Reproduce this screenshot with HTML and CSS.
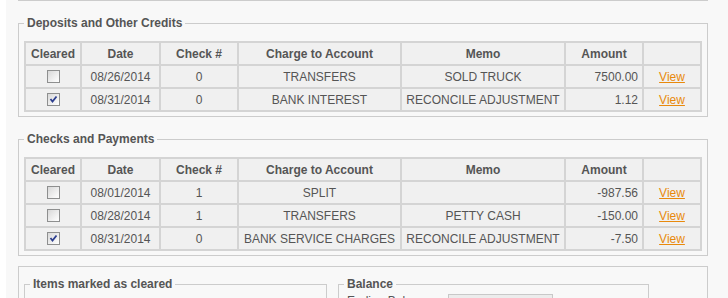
FILE: index.html
```html
<!DOCTYPE html>
<html>
<head>
<meta charset="utf-8">
<title>Reconcile</title>
<link rel="stylesheet" href="styles.css">
</head>
<body>
<div class="page">
  <div class="prev"></div>

  <fieldset class="group">
    <legend>Deposits and Other Credits</legend>
    <table class="grid">
      <thead>
        <tr><th class="c-clr">Cleared</th><th class="c-date">Date</th><th class="c-chk">Check #</th><th class="c-acct">Charge to Account</th><th class="c-memo">Memo</th><th class="c-amt">Amount</th><th class="c-view"></th></tr>
      </thead>
      <tbody>
        <tr><td><span class="cb"></span></td><td>08/26/2014</td><td>0</td><td>TRANSFERS</td><td>SOLD TRUCK</td><td class="amt">7500.00</td><td><a href="#">View</a></td></tr>
        <tr><td><span class="cb"><svg viewBox="0 0 11 11" width="11" height="11"><path d="M2.5 5 L4.5 7.5 L8.5 2.5" fill="none" stroke="#2d3f8f" stroke-width="1.8"/></svg></span></td><td>08/31/2014</td><td>0</td><td>BANK INTEREST</td><td>RECONCILE ADJUSTMENT</td><td class="amt">1.12</td><td><a href="#">View</a></td></tr>
      </tbody>
    </table>
  </fieldset>

  <fieldset class="group">
    <legend>Checks and Payments</legend>
    <table class="grid">
      <thead>
        <tr><th class="c-clr">Cleared</th><th class="c-date">Date</th><th class="c-chk">Check #</th><th class="c-acct">Charge to Account</th><th class="c-memo">Memo</th><th class="c-amt">Amount</th><th class="c-view"></th></tr>
      </thead>
      <tbody>
        <tr><td><span class="cb"></span></td><td>08/01/2014</td><td>1</td><td>SPLIT</td><td></td><td class="amt">-987.56</td><td><a href="#">View</a></td></tr>
        <tr><td><span class="cb"></span></td><td>08/28/2014</td><td>1</td><td>TRANSFERS</td><td>PETTY CASH</td><td class="amt">-150.00</td><td><a href="#">View</a></td></tr>
        <tr><td><span class="cb"><svg viewBox="0 0 11 11" width="11" height="11"><path d="M2.5 5 L4.5 7.5 L8.5 2.5" fill="none" stroke="#2d3f8f" stroke-width="1.8"/></svg></span></td><td>08/31/2014</td><td>0</td><td>BANK SERVICE CHARGES</td><td>RECONCILE ADJUSTMENT</td><td class="amt">-7.50</td><td><a href="#">View</a></td></tr>
      </tbody>
    </table>
  </fieldset>

  <div class="summary">
    <fieldset class="sub items">
      <legend>Items marked as cleared</legend>
      <div class="items-body">
        <div class="line">Deposits and Other Credits</div>
        <div class="line">Checks and Payments</div>
      </div>
    </fieldset>
    <fieldset class="sub balance">
      <legend>Balance</legend>
      <div class="bal-row">
        <span class="bal-label">Ending Balance</span>
        <span class="inp"></span>
      </div>
    </fieldset>
  </div>
</div>
</body>
</html>
```

FILE: styles.css
```css
* { box-sizing: border-box; }
html, body { margin: 0; height: 298px; overflow: hidden; }
body {
  background: #fff;
  font-family: "Liberation Sans", Arial, sans-serif;
  font-size: 12px;
  color: #555;
}
.page {
  margin-left: 6px;
  background: #f8f8f8;
  padding: 0 20px 0 12px;
  min-height: 298px;
}
.prev { border-top: 1px solid #ccc; }

.group {
  margin: 15px 0 0;
  border: 1px solid #ccc;
  padding: 11px 5px 4px;
  min-width: 0;
}
legend {
  padding: 0 3px;
  font-weight: bold;
  line-height: 14px;
  color: #555;
}

.grid {
  width: 100%;
  table-layout: fixed;
  border-collapse: separate;
  border-spacing: 0;
  border-top: 2px solid #d4d4d4;
  border-left: 2px solid #d4d4d4;
}
.grid th, .grid td {
  border-right: 2px solid #d4d4d4;
  border-bottom: 2px solid #d4d4d4;
  background: #f0f0f0;
  height: 23px;
  padding: 0 4px;
  text-align: center;
  white-space: nowrap;
  overflow: hidden;
  color: #555;
}
.grid th { font-weight: bold; }
.c-clr { width: 56px; }
.c-date { width: 79px; }
.c-chk { width: 78px; }
.c-acct { width: 163px; }
.c-memo { width: 164px; }
.c-amt { width: 78px; }
.c-view { width: 58px; }
.grid td.amt { text-align: right; padding-right: 4px; }
.grid a { color: #e8890c; text-decoration: underline; }

.cb {
  display: inline-block;
  width: 13px;
  height: 13px;
  border: 1px solid #8e8f8f;
  background: linear-gradient(135deg, #d8d8d8 0%, #f4f4f4 70%, #fff 100%);
  vertical-align: middle;
  position: relative;
  top: -1px;
}
.cb svg { display: block; }

.summary {
  margin-top: 10px;
  border: 1px solid #ccc;
  padding: 10px 5px;
  display: flex;
  gap: 11px;
  align-items: flex-start;
}
.sub {
  margin: 0;
  border: 1px solid #ccc;
  padding: 0 5px 6px;
  min-width: 0;
}
.items { width: 303px; }
.balance { width: 311px; }
.items-body { padding-top: 16px; }
.items-body .line { line-height: 20px; padding-left: 3px; }
.bal-row { display: flex; align-items: flex-start; }
.bal-label { width: 104px; padding: 3px 0 0 3px; line-height: 14px; }
.inp {
  display: block;
  width: 105px;
  height: 20px;
  margin-top: 3px;
  border: 1px solid #c8c8c8;
  background: #ececec;
}
```
